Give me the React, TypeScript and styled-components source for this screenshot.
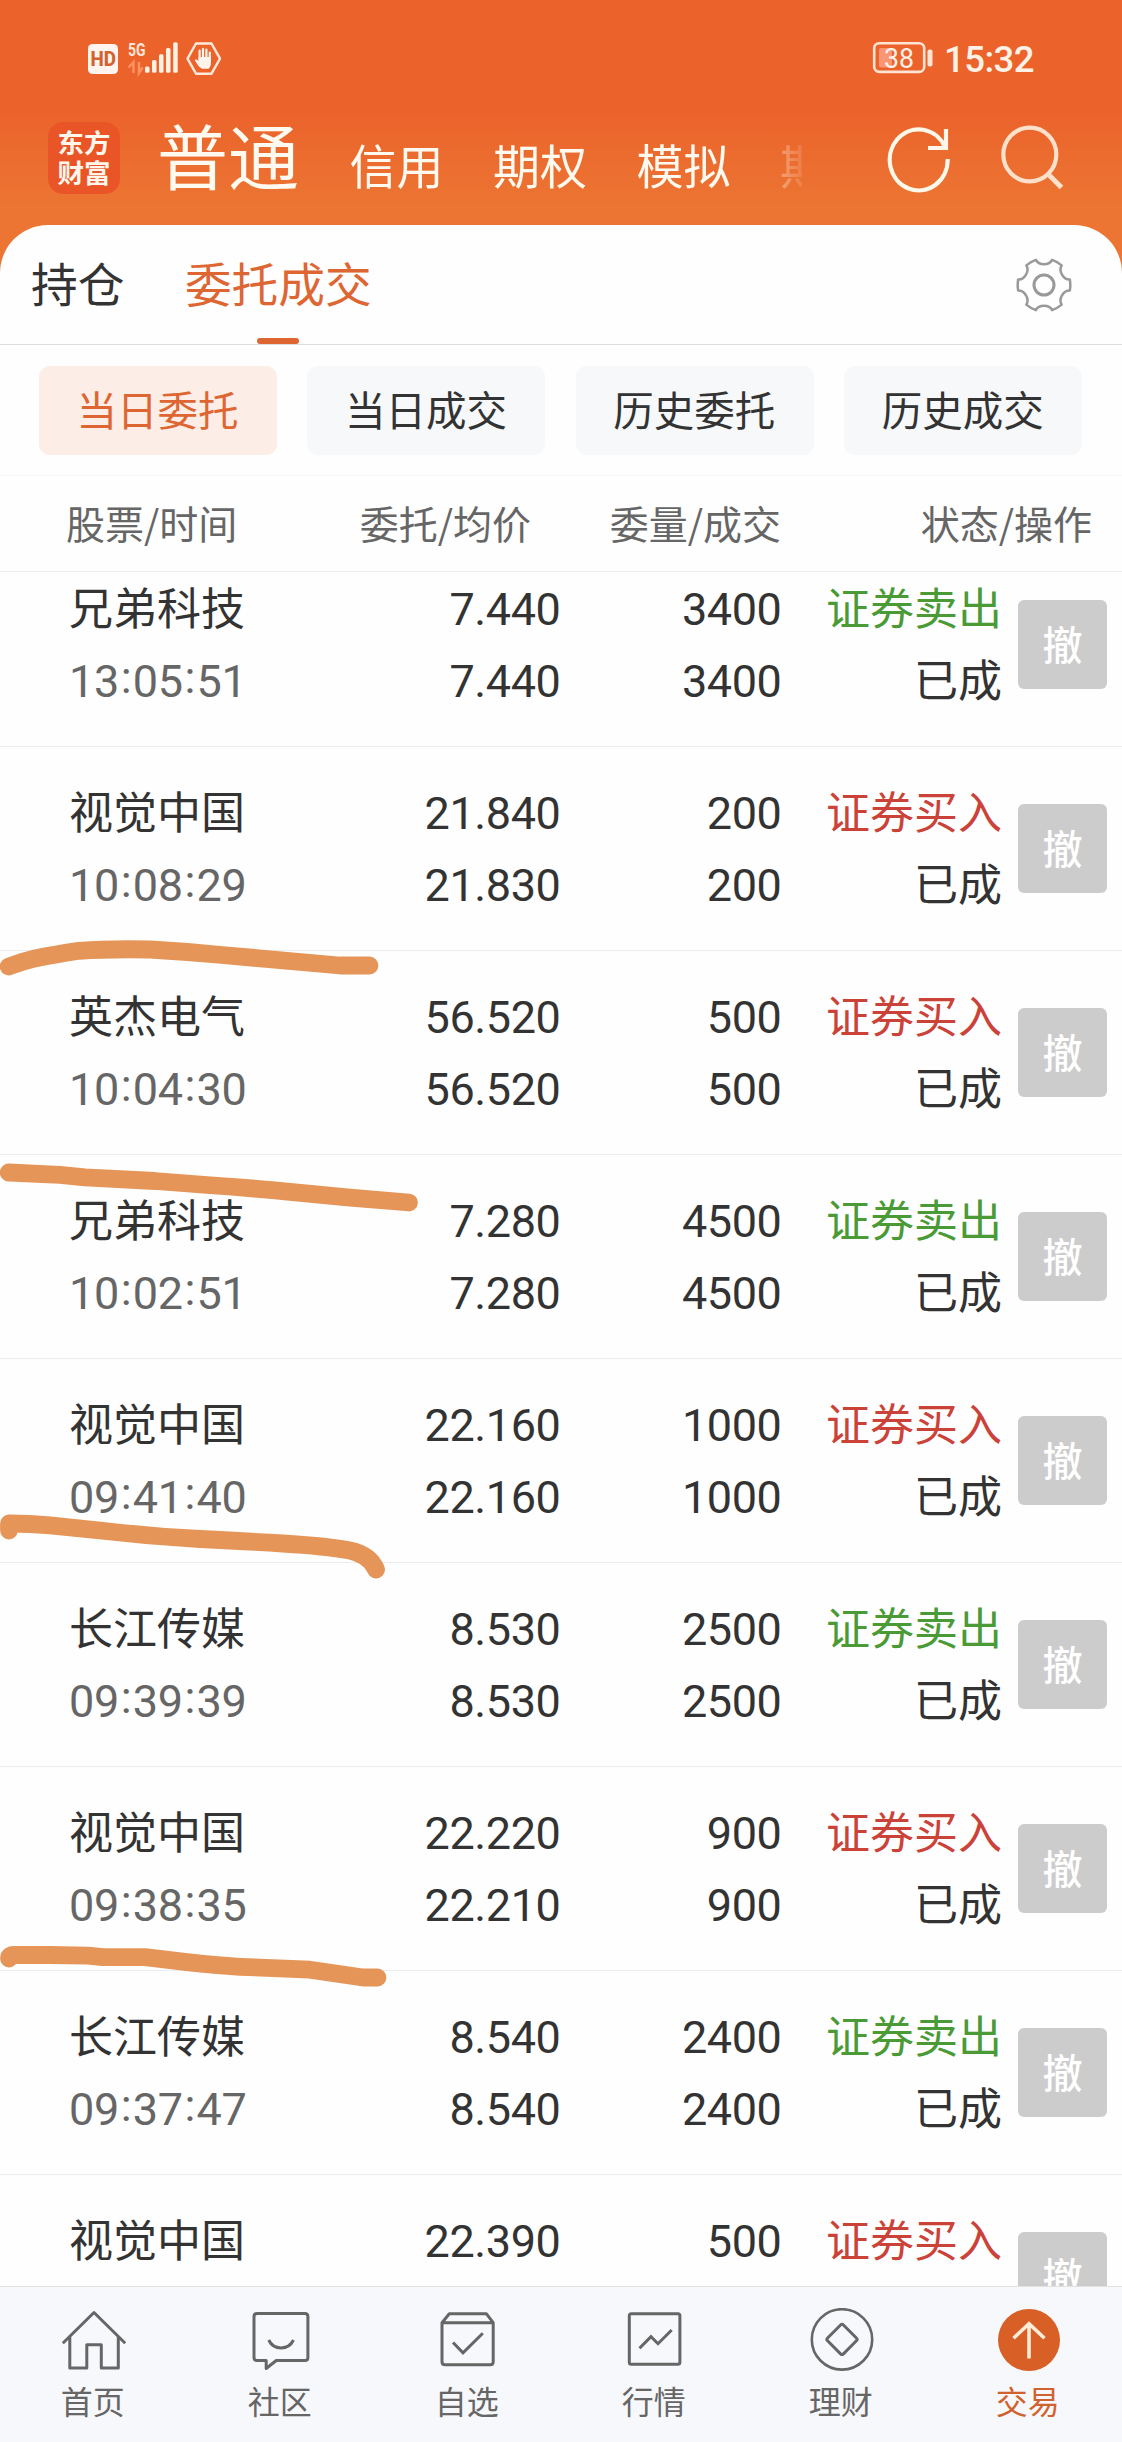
import React from "react";
import styled, { createGlobalStyle } from "styled-components";

const CJK = `"Noto Sans CJK SC", "Noto Sans", sans-serif`;
const DIGITS = `Roboto, "Noto Sans CJK SC", sans-serif`;

const GlobalStyle = createGlobalStyle`
  *, *::before, *::after { box-sizing: border-box; }
  body { margin: 0; background: #fff; }
  button { border: 0; padding: 0; background: none; font: inherit; }
`;

const Screen = styled.div`
  display: flex;
  flex-direction: column;
  width: 1122px;
  height: 2442px;
  overflow: hidden;
  font-family: ${CJK};
  color: #333;
  background: linear-gradient(#eb632b 0, #eb632b 112px, #ec7533 206px, #ec7533 290px, #fff 290px);
`;

/* ---------- status bar ---------- */

const StatusBar = styled.div`
  display: flex;
  justify-content: space-between;
  height: 116px;
  padding: 40px 88px 0 86px;
`;

const StatusGroup = styled.div`
  display: flex;
  align-items: center;
  height: 37px;
`;

const Clock = styled.span`
  margin: 1px 0 0 10px;
  font: 500 36.500px/37px ${DIGITS};
  letter-spacing: -0.5px;
  color: #fff1e6;
`;

const HandIcon = () => (
  <svg width="38" height="37" viewBox="0 0 38 37" fill="none">
    <path d="M12 3.500h15.500l8.500 15.200-8.500 15h-15.500L3.500 18.700z" stroke="#ffe9dc" strokeWidth="2.400" strokeLinejoin="round" />
    <path
      d="M15.600 10.500v10M19 8.900v11M22.400 9.500v11M25.800 12.500v10"
      stroke="#fff4ec"
      strokeWidth="2.200"
      strokeLinecap="round"
    />
    <path
      d="M14.500 17h12.400v6.500c0 2.400-1 4-2.400 5.300h-6.400c-3.600-1.800-5.400-5.400-7.400-8.800 1.300-1 2.700-.3 3.800 1.200z"
      fill="#fff4ec"
    />
  </svg>
);

const SignalIcons = () => (
  <svg width="98" height="37" viewBox="0 0 98 37">
    <rect x="2" y="4" width="30" height="30" rx="4.500" fill="#fff4ee" />
    <text x="4.500" y="26" fontFamily="Roboto" fontWeight="800" fontSize="20" textLength="25.500" lengthAdjust="spacingAndGlyphs" fill="#d4622f">HD</text>
    <text x="42" y="15.600" fontFamily="Roboto" fontWeight="700" fontSize="18" textLength="17.500" lengthAdjust="spacingAndGlyphs" fill="#ffe6d8">5G</text>
    <path d="M42.500 27.500l5-5.500v11M53 22v11l3.500-5.500" fill="none" stroke="#ff9165" strokeWidth="2.400" />
    <g fill="#fff0e4">
      <rect x="59" y="26.500" width="4.500" height="6.300" rx="1.500" />
      <rect x="66" y="20" width="4.500" height="12.800" rx="1.500" />
      <rect x="73" y="14.300" width="4.500" height="18.500" rx="1.500" />
      <rect x="80" y="8" width="4.500" height="24.800" rx="1.500" />
      <rect x="87.200" y="2.300" width="4.500" height="30.500" rx="1.500" />
    </g>
  </svg>
);

const BatteryIcon = () => (
  <svg width="62" height="37" viewBox="0 0 62 37">
    <rect x="2.200" y="3.300" width="50" height="28.600" rx="5" fill="none" stroke="#ffe3d3" strokeWidth="2.600" />
    <rect x="7" y="8" width="13" height="19.500" rx="2" fill="#f99674" />
    <rect x="55.500" y="9.500" width="5" height="17" rx="2" fill="#ffe3d3" />
    <text x="12" y="27.500" fontFamily="Roboto" fontSize="27" textLength="30" lengthAdjust="spacingAndGlyphs" fill="#fff1e8">38</text>
  </svg>
);

/* ---------- brand bar ---------- */

const BrandBar = styled.header`
  display: flex;
  height: 109px;
  padding-left: 48px;
`;

const Logo = styled.div`
  display: flex;
  flex-direction: column;
  justify-content: center;
  align-items: center;
  flex: none;
  width: 72px;
  height: 72px;
  margin-top: 6px;
  padding-bottom: 2px;
  border-radius: 15px;
  background: #ea5528;
  color: #fff6ec;
  font-weight: 700;
  font-size: 26.500px;
  line-height: 30px;
`;

const Accounts = styled.nav`
  display: flex;
  align-items: baseline;
  gap: 49.500px;
  width: 645px;
  height: 104px;
  margin-left: 37px;
  margin-top: -2px;
  overflow: hidden;
  white-space: nowrap;
  mask-image: linear-gradient(to right, #000 600px, rgba(0, 0, 0, 0.35) 624px, rgba(0, 0, 0, 0.12) 645px);
`;

const Account = styled.span<{ $current?: boolean }>`
  flex: none;
  font-size: ${(p) => (p.$current ? 71 : 47)}px;
  line-height: 78px;
  margin-right: ${(p) => (p.$current ? 1 : 0)}px;
  color: #fffaf0;
`;

const HeadActions = styled.div`
  display: flex;
  gap: 43px;
  margin: 7px 0 0 83px;
`;

const RefreshIcon = () => (
  <svg width="68" height="70" viewBox="0 0 68 70" fill="none" stroke="#fff8ea" strokeWidth="4.200">
    <path d="M62.700 36A29 30.500 0 1 1 60 24" />
    <path d="M61 6v19H43" />
  </svg>
);

const SearchIcon = () => (
  <svg width="68" height="70" viewBox="0 0 68 70" fill="none" stroke="#ffe1cb" strokeWidth="4.200">
    <ellipse cx="33.800" cy="31.500" rx="26.500" ry="26.800" />
    <path d="M52 51l13.500 13.500" strokeWidth="5" />
  </svg>
);

/* ---------- sheet ---------- */

const Sheet = styled.main`
  display: flex;
  flex-direction: column;
  flex: 1;
  min-height: 0;
  border-radius: 48px 48px 0 0;
  background: #fefefe;
`;

const TabBar = styled.div`
  display: flex;
  height: 120px;
  flex: none;
  padding: 0 50px 0 31px;
  border-bottom: 1px solid #dcdcdc;
`;

const Tab = styled.div<{ $active?: boolean }>`
  display: flex;
  flex-direction: column;
  align-items: center;
  justify-content: space-between;
  margin-right: 60.500px;
  font-size: 46.700px;
  line-height: 114px;
  color: ${(p) => (p.$active ? "#dd6633" : "#333")};
  height: 119px;
`;

const TabLabel = styled.span`
  height: 112px;
`;

const TabMark = styled.i`
  width: 42px;
  height: 6px;
  border-radius: 3px;
  background: #dd6633;
`;

const SettingsSlot = styled.div`
  margin: 30.500px 0 0 auto;
`;

const point = (deg: number, r: number) => {
  const a = (deg * Math.PI) / 180;
  return `${(r * Math.cos(a)).toFixed(2)} ${(r * Math.sin(a)).toFixed(2)}`;
};

const gearPath =
  [0, 60, 120, 180, 240, 300]
    .map(
      (a) =>
        `${a ? "L" : "M"}${point(a - 12, 26.4)}Q${point(a, 26.8)} ${point(a + 12, 26.4)}C${point(a + 15, 20)} ${point(a + 45, 20)} ${point(a + 48, 26.4)}`
    )
    .join("") + "Z";

const GearIcon = () => (
  <svg width="56" height="58" viewBox="-28 -29 56 58" fill="none" stroke="#999" strokeLinejoin="round">
    <path d={gearPath} strokeWidth="2.500" />
    <circle r="10" strokeWidth="3" />
  </svg>
);

const Filters = styled.div`
  display: grid;
  grid-template-columns: repeat(4, 238px);
  column-gap: 30.400px;
  flex: none;
  height: 131px;
  padding: 21px 0 20px 39px;
  border-bottom: 1px solid #f5f5f5;
`;

const FilterButton = styled.button<{ $active?: boolean }>`
  height: 89px;
  border-radius: 11px;
  font-size: 40.500px;
  line-height: 86px;
  padding: 0 1px 3px 0;
  color: ${(p) => (p.$active ? "#dd6633" : "#333")};
  background: ${(p) => (p.$active ? "#fcede6" : "#f7f8fa")};
`;

const ColumnHeads = styled.div`
  display: grid;
  grid-template-columns: 200px 265px 250px 311px;
  flex: none;
  height: 96px;
  padding-left: 66px;
  border-bottom: 1px solid #ececec;
  font-size: 39px;
  line-height: 92px;
  color: #666;
`;

const ColumnHead = styled.span<{ $end?: boolean }>`
  text-align: ${(p) => (p.$end ? "right" : "left")};
`;

const ListViewport = styled.div`
  position: relative;
  flex: 1;
  min-height: 0;
  overflow: hidden;
`;

const OrderList = styled.div`
  margin-top: -29px;
`;

const OrderRow = styled.div`
  display: grid;
  grid-template-columns: 231px 260.500px 221px 220.500px 105px;
  height: 204px;
  padding: 30px 0 0 69px;
  border-bottom: 1px solid #ececec;
`;

const Pair = styled.div<{ $end?: boolean }>`
  display: flex;
  flex-direction: column;
  align-items: ${(p) => (p.$end ? "flex-end" : "flex-start")};
`;

const Label = styled.span<{ $tone?: string }>`
  font-size: 44px;
  line-height: 72px;
  height: 72px;
  margin-top: -3px;
  margin-bottom: 3px;
  color: ${(p) => p.$tone ?? "#333"};
`;

const Figure = styled.span<{ $muted?: boolean }>`
  font: 400 45px/73px ${DIGITS};
  letter-spacing: -0.4px;
  height: 72px;
  color: ${(p) => (p.$muted ? "#666" : "#333")};
`;

const Colon = styled.span`
  padding: 0 1.500px 0 2px;
  line-height: 1;
  vertical-align: 4px;
`;

const CancelButton = styled.button`
  width: 89px;
  height: 89px;
  margin: 27px 0 0 16px;
  padding-bottom: 2px;
  border-radius: 6px;
  background: #ccc;
  color: #fff;
  font-size: 40px;
  font-weight: 500;
  line-height: 87px;
`;

const Marks = styled.svg`
  position: absolute;
  left: 0;
  top: 0;
`;

/* ---------- bottom navigation ---------- */

const BottomNav = styled.nav`
  display: grid;
  grid-template-columns: repeat(6, 1fr);
  flex: none;
  height: 156px;
  border-top: 1px solid #e2e2e2;
  background: #f7f8fb;
`;

const NavItem = styled.div<{ $active?: boolean }>`
  display: flex;
  flex-direction: column;
  align-items: center;
  padding-top: 21px;
  font-size: 32px;
  line-height: 57px;
  color: ${(p) => (p.$active ? "#d0622f" : "#666")};
`;

const NavLabel = styled.span`
  margin-right: 1.500px;
`;

const NavSvg = ({ children }: { children: React.ReactNode }) => (
  <svg width="64" height="64" viewBox="0 0 64 64" fill="none" stroke="#666" strokeWidth="3" strokeLinejoin="round">
    {children}
  </svg>
);

const navItems = [
  {
    label: "首页",
    icon: <path d="M.8 35.200L32 4.500l31.200 30.700M7.800 29v31h17V36.800h14.500V60h17V29" />,
  },
  {
    label: "社区",
    icon: (
      <>
        <path d="M8 5.500h48q2.900 0 2.900 3V49.500q0 3-2.900 3H27.200L17.200 60.500V52.500H8q-3 0-3-3v-41q0-3 3-3z" />
        <path d="M19.700 32c5 10.500 19.700 10.500 24.800 0" />
      </>
    ),
  },
  {
    label: "自选",
    icon: (
      <>
        <path d="M6 14.700l7.300-9h37l6.900 9v39q0 3-3 3H9q-3 0-3-3zM6 14.700h51.200" />
        <path d="M17 34.500l10 10.300 19.800-19.500" strokeLinejoin="miter" />
      </>
    ),
  },
  {
    label: "行情",
    icon: (
      <>
        <rect x="6.300" y="5.800" width="50.600" height="50.400" rx="2" />
        <path d="M16.500 40.300L28 28.700l7 7 13.700-13.700" strokeLinejoin="miter" />
      </>
    ),
  },
  {
    label: "理财",
    icon: (
      <>
        <circle cx="32" cy="31.400" r="30.200" strokeWidth="2.600" />
        <rect x="20.800" y="20.200" width="22.400" height="22.400" rx="2" transform="rotate(45 32 31.400)" />
      </>
    ),
  },
  {
    label: "交易",
    active: true,
    icon: (
      <>
        <circle cx="32" cy="32" r="31" fill="#d85f26" stroke="none" />
        <path d="M32 16.500v34M16.500 30.200L32 15.800l15.500 14.400" stroke="#ffecd6" strokeWidth="3.600" strokeLinejoin="miter" />
      </>
    ),
  },
];

/* ---------- data ---------- */

type Order = { name: string; time?: string; price: string; avg?: string; qty: string; side: "buy" | "sell" };

const orders: Order[] = [
  { name: "兄弟科技", time: "13:05:51", price: "7.440", avg: "7.440", qty: "3400", side: "sell" },
  { name: "视觉中国", time: "10:08:29", price: "21.840", avg: "21.830", qty: "200", side: "buy" },
  { name: "英杰电气", time: "10:04:30", price: "56.520", avg: "56.520", qty: "500", side: "buy" },
  { name: "兄弟科技", time: "10:02:51", price: "7.280", avg: "7.280", qty: "4500", side: "sell" },
  { name: "视觉中国", time: "09:41:40", price: "22.160", avg: "22.160", qty: "1000", side: "buy" },
  { name: "长江传媒", time: "09:39:39", price: "8.530", avg: "8.530", qty: "2500", side: "sell" },
  { name: "视觉中国", time: "09:38:35", price: "22.220", avg: "22.210", qty: "900", side: "buy" },
  { name: "长江传媒", time: "09:37:47", price: "8.540", avg: "8.540", qty: "2400", side: "sell" },
  { name: "视觉中国", price: "22.390", qty: "500", side: "buy" },
];

const Time = ({ value }: { value: string }) => {
  const [h, m, s] = value.split(":");
  return (
    <Figure $muted>
      {h}
      <Colon>:</Colon>
      {m}
      <Colon>:</Colon>
      {s}
    </Figure>
  );
};

const marks = [
  "M8.700 966.500Q22 961.500 36 958.200Q55 954.500 79 950.800Q110 948.600 150 949.500Q185 951.500 222 955L340 965.500H369.500",
  "M8.700 1172.500L60 1174.800L85 1177.300L155 1181L207 1185Q250 1188 290 1191.800L350 1197.700L409 1202.500",
  "M9 1530.500V1523.500Q30 1523.500 50 1525.300L100 1530.500Q150 1536.500 200 1539T283 1543.500Q325 1546 350 1550.500Q370 1555 376 1569.500",
  "M9 1958.500Q9 1955 14 1955H50L88 1955.600L103 1957.200H145L187 1962.200Q215 1965.500 240 1966.800L310 1969.700L363 1977.500L377.500 1977.500",
];

export default function App() {
  return (
    <Screen>
      <GlobalStyle />
      <StatusBar>
        <StatusGroup>
          <SignalIcons />
          <HandIcon />
        </StatusGroup>
        <StatusGroup>
          <BatteryIcon />
          <Clock>15:32</Clock>
        </StatusGroup>
      </StatusBar>
      <BrandBar>
        <Logo>
          <span>东方</span>
          <span>财富</span>
        </Logo>
        <Accounts>
          <Account $current>普通</Account>
          <Account>信用</Account>
          <Account>期权</Account>
          <Account>模拟</Account>
          <Account>期</Account>
        </Accounts>
        <HeadActions>
          <RefreshIcon />
          <SearchIcon />
        </HeadActions>
      </BrandBar>
      <Sheet>
        <TabBar>
          <Tab>
            <TabLabel>持仓</TabLabel>
          </Tab>
          <Tab $active>
            <TabLabel>委托成交</TabLabel>
            <TabMark />
          </Tab>
          <SettingsSlot>
            <GearIcon />
          </SettingsSlot>
        </TabBar>
        <Filters>
          {["当日委托", "当日成交", "历史委托", "历史成交"].map((t, i) => (
            <FilterButton key={t} $active={i === 0}>
              {t}
            </FilterButton>
          ))}
        </Filters>
        <ColumnHeads>
          {["股票/时间", "委托/均价", "委量/成交", "状态/操作"].map((t, i) => (
            <ColumnHead key={t} $end={i > 0}>
              {t}
            </ColumnHead>
          ))}
        </ColumnHeads>
        <ListViewport>
          <OrderList>
            {orders.map((o, i) => (
              <OrderRow key={i}>
                <Pair>
                  <Label>{o.name}</Label>
                  {o.time && <Time value={o.time} />}
                </Pair>
                <Pair $end>
                  <Figure>{o.price}</Figure>
                  {o.avg && <Figure>{o.avg}</Figure>}
                </Pair>
                <Pair $end>
                  <Figure>{o.qty}</Figure>
                  {o.avg && <Figure>{o.qty}</Figure>}
                </Pair>
                <Pair $end>
                  <Label $tone={o.side === "buy" ? "#cb4238" : "#4a9a36"}>
                    {o.side === "buy" ? "证券买入" : "证券卖出"}
                  </Label>
                  {o.avg && <Label>已成</Label>}
                </Pair>
                <CancelButton>撤</CancelButton>
              </OrderRow>
            ))}
          </OrderList>
          <Marks width="450" height="1714" viewBox="0 572 450 1714" fill="none">
            {marks.map((d) => (
              <path key={d} d={d} stroke="#e59558" strokeWidth="17.800" strokeLinecap="round" strokeLinejoin="round" />
            ))}
          </Marks>
        </ListViewport>
        <BottomNav>
          {navItems.map((n) => (
            <NavItem key={n.label} $active={n.active}>
              <NavSvg>{n.icon}</NavSvg>
              <NavLabel>{n.label}</NavLabel>
            </NavItem>
          ))}
        </BottomNav>
      </Sheet>
    </Screen>
  );
}
